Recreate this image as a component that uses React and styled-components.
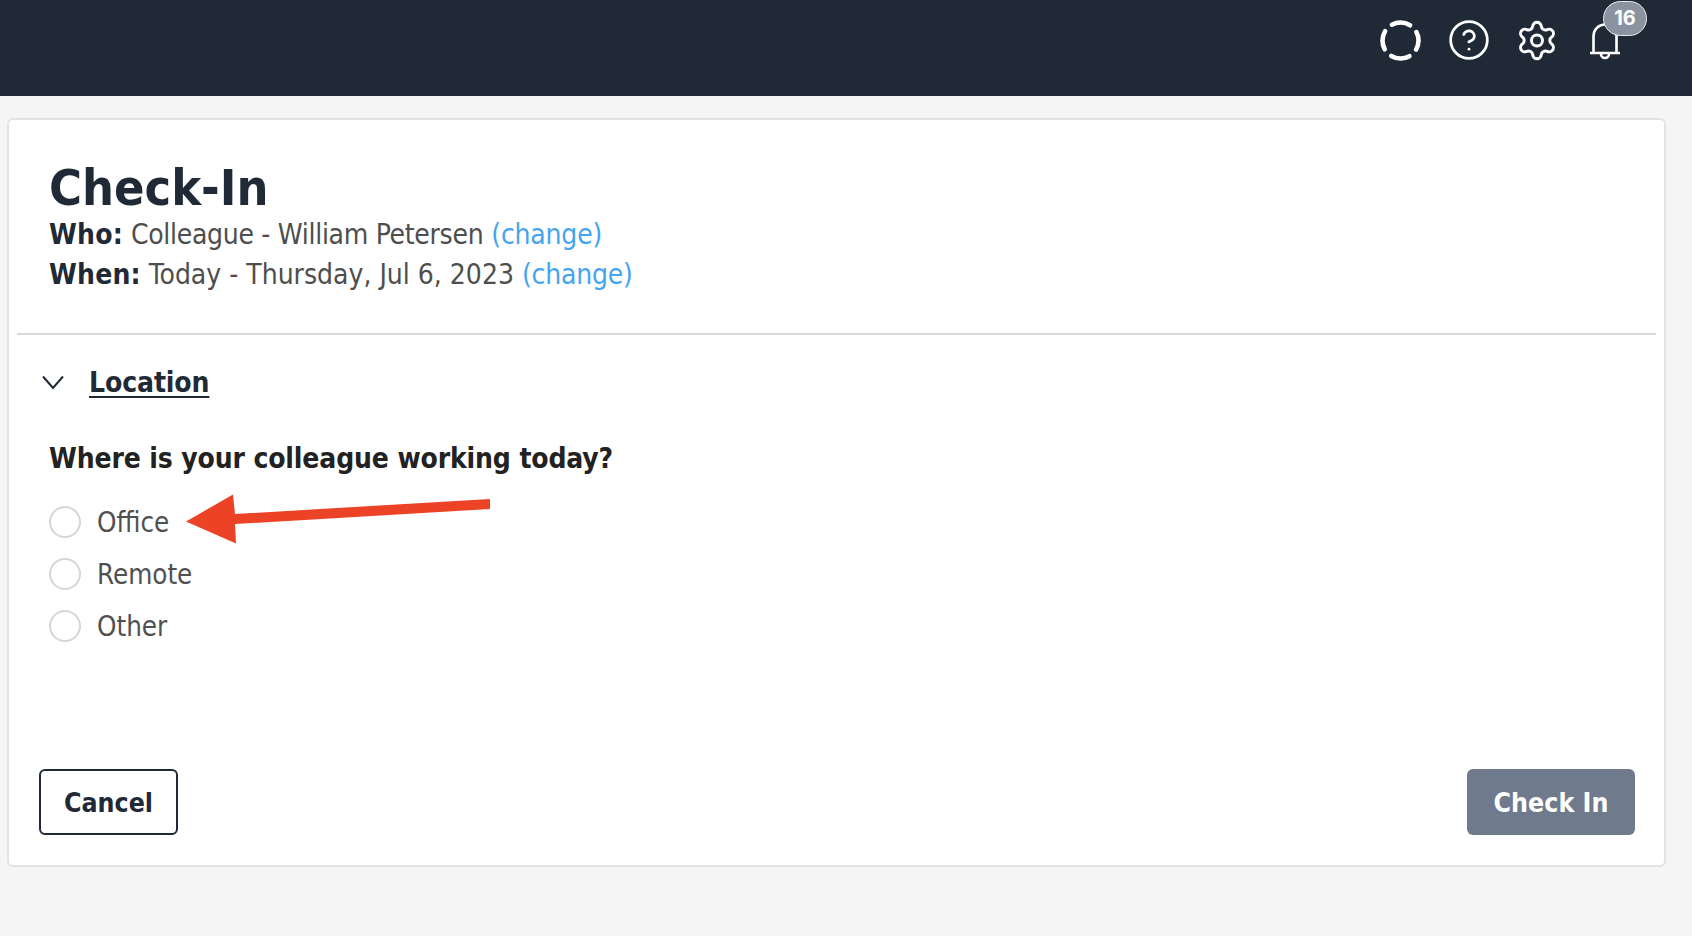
import React from "react";
import styled, { createGlobalStyle } from "styled-components";
import { CircleHelp, Settings } from "lucide-react";

const Global = createGlobalStyle`
  html, body { margin: 0; padding: 0; background: #f5f5f5; }
  body { font-family: "DejaVu Sans", "Noto Sans", sans-serif; font-stretch: condensed; }
`;
const Page = styled.div`
  position: relative; width: 1692px; height: 936px; overflow: hidden; background: #f5f5f5;
`;
const TopBar = styled.header`
  height: 96px; background: #1f2a36; display: flex; justify-content: flex-end; align-items: flex-start;
  padding: 18px 65px 0 0; box-sizing: border-box; gap: 24px; color: #fff;
`;
const IconSlot = styled.div`
  position: relative; width: 44px; height: 44px; display: flex; align-items: center; justify-content: center;
`;
const Badge = styled.span`
  position: absolute; top: -17px; left: 20px; width: 44px; height: 35px; box-sizing: border-box;
  border-radius: 18px; border: 1.5px solid #e8eaec; background: #8a94a1; color: #fff;
  font: 700 20px/32px "Inter", sans-serif; text-align: center;
`;
const Card = styled.main`
  margin: 22px 26px 0 7px; height: 749px; box-sizing: border-box; background: #fff;
  border: 2px solid #e3e3e3; border-radius: 6px; padding: 0 8px; display: flex; flex-direction: column;
`;
const Head = styled.section`
  padding: 42px 0 38px 32px; border-bottom: 2px solid #d9d9d9;
`;
const Title = styled.h1`
  margin: 0; font-size: 50px; line-height: 53px; font-weight: 700; color: #1f2a36;
`;
const Meta = styled.div`
  font-size: 28px; line-height: 40px; color: #4e4e4e;
`;
const MetaValue = styled.span`
  letter-spacing: ${p => p.$spacing || 0}px;
`;
const MetaKey = styled.b`
  color: #1f2a36; letter-spacing: 0.2px;
`;
const ChangeLink = styled.a`
  color: #45a5ee; letter-spacing: -0.2px;
`;
const Section = styled.section`
  flex: 1; display: flex; flex-direction: column;
`;
const SectionBody = styled.div`
  padding-left: 32px;
`;
const SectionToggle = styled.div`
  display: flex; align-items: center; gap: 25px; margin: 29px 0 0 -7px; height: 36px; color: #1f2a36;
`;
const SectionName = styled.span`
  font-size: 28px; font-weight: 700; text-decoration: underline; text-underline-offset: 4px; letter-spacing: -0.1px;
`;
const Question = styled.h2`
  margin: 39px 0 0; font-size: 28px; line-height: 40px; font-weight: 700; color: #222; letter-spacing: -0.14px;
`;
const Options = styled.div`
  display: flex; flex-direction: column; gap: 12px; margin-top: 23px;
`;
const Option = styled.label`
  display: flex; align-items: center; gap: 16px; height: 40px; font-size: 27.5px; color: #505050;
`;
const Radio = styled.span`
  width: 32px; height: 32px; box-sizing: border-box; border: 2px solid #d6d6d6; border-radius: 50%;
`;
const Footer = styled.footer`
  margin-top: auto; display: flex; justify-content: space-between; padding: 0 21px 30px 22px;
`;
const Button = styled.button`
  height: 66px; box-sizing: border-box; border-radius: 6px; font: inherit; font-size: 26.5px; font-weight: 700;
  font-stretch: condensed; width: ${p => p.$w}px; padding: 0;
  color: ${p => (p.$primary ? "#fff" : "#1f2a36")};
  background: ${p => (p.$primary ? "#6f7a8c" : "#fff")};
  border: ${p => (p.$primary ? "none" : "2px solid #1f2a36")};
`;
const Arrow = styled.svg`
  position: absolute; left: 180px; top: 490px;
`;

const Spinner = () => (
  <svg width="44" height="44" viewBox="0 0 44 44" fill="none" stroke="#fff" strokeWidth="4.6" strokeLinecap="round">
    <circle cx="21.5" cy="22.5" r="18" strokeDasharray="19 9.27" strokeDashoffset="9.5" />
  </svg>
);
const BellIcon = () => (
  <svg width="44" height="44" viewBox="0 0 44 44" fill="none" stroke="#fff" strokeWidth="2.6">
    <path d="M7 35H37M10.5 35V18a11.5 11.5 0 0 1 23 0V35M18 36a4 4 0 0 0 8 0" />
  </svg>
);
const Chevron = () => (
  <svg width="22" height="15" viewBox="0 0 22 15" fill="none" stroke="#1f2a36" strokeWidth="2">
    <path d="M1 1.5L11 13L21 1.5" />
  </svg>
);

export default function App() {
  return (
    <Page>
      <Global />
      <TopBar>
        <IconSlot><Spinner /></IconSlot>
        <IconSlot><CircleHelp size={46} strokeWidth={1.5} /></IconSlot>
        <IconSlot><Settings size={45} strokeWidth={1.6} /></IconSlot>
        <IconSlot><BellIcon /><Badge>16</Badge></IconSlot>
      </TopBar>
      <Card>
        <Head>
          <Title>Check-In</Title>
          <Meta><MetaKey>Who:</MetaKey> <MetaValue $spacing={-0.3}>Colleague - William Petersen</MetaValue> <ChangeLink>(change)</ChangeLink></Meta>
          <Meta><MetaKey>When:</MetaKey> <MetaValue>Today - Thursday, Jul 6, 2023</MetaValue> <ChangeLink>(change)</ChangeLink></Meta>
        </Head>
        <Section>
          <SectionBody>
            <SectionToggle>
              <Chevron />
              <SectionName>Location</SectionName>
            </SectionToggle>
            <Question>Where is your colleague working today?</Question>
            <Options>
              <Option><Radio />Office</Option>
              <Option><Radio />Remote</Option>
              <Option><Radio />Other</Option>
            </Options>
          </SectionBody>
          <Footer>
            <Button $w={139}>Cancel</Button>
            <Button $primary $w={168}>Check In</Button>
          </Footer>
        </Section>
      </Card>
      <Arrow width="320" height="60" viewBox="180 490 320 60">
        <polygon fill="#ec4226" points="186,521.5 233,494.5 235,514 490,499 490,509 235,524 236,543.5" />
      </Arrow>
    </Page>
  );
}
